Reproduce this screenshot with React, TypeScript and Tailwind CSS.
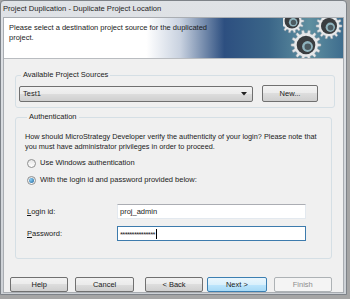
import React from "react";

const font = { fontFamily: '"Liberation Sans", Arial, sans-serif' };

function gearPath(cx: number, cy: number, ro: number, ri: number, teeth: number) {
  const pts: string[] = [];
  const step = (Math.PI * 2) / teeth;
  for (let i = 0; i < teeth; i++) {
    const a = i * step;
    const seq = [
      [a - step * 0.28, ri],
      [a - step * 0.16, ro],
      [a + step * 0.16, ro],
      [a + step * 0.28, ri],
    ];
    for (const [ang, r] of seq) {
      pts.push(`${(cx + Math.cos(ang) * r).toFixed(2)},${(cy + Math.sin(ang) * r).toFixed(2)}`);
    }
  }
  return "M" + pts.join("L") + "Z";
}

function Gear({ cx, cy, r }: { cx: number; cy: number; r: number }) {
  return (
    <g>
      <path d={gearPath(cx, cy, r, r * 0.8, 14)} fill="#e6e8ea" stroke="#9aa3aa" strokeWidth="0.5" />
      <circle cx={cx} cy={cy} r={r * 0.62} fill="#3a3d40" />
      <circle cx={cx + r * 0.1} cy={cy + r * 0.1} r={r * 0.36} fill="#8fb3bd" />
      <circle cx={cx + r * 0.12} cy={cy + r * 0.12} r={r * 0.22} fill="#4c5a60" />
    </g>
  );
}

function Gears() {
  return (
    <svg width="60" height="40" viewBox="0 0 60 40" className="shrink-0">
      <Gear cx={9} cy={3} r={12} />
      <Gear cx={46} cy={8} r={13} />
      <Gear cx={23} cy={27} r={15} />
    </svg>
  );
}

function WinButton({
  children,
  variant = "normal",
  className = "",
}: {
  children: React.ReactNode;
  variant?: "normal" | "default" | "disabled";
  className?: string;
}) {
  const styles =
    variant === "default"
      ? "border-[#3c7fb1] bg-[linear-gradient(#eaf6fd,#d9f0fc_50%,#bee6fd_50%,#a7d9f5)] text-[#1a1a1a]"
      : variant === "disabled"
      ? "border-[#adb2b5] bg-[#f4f4f4] text-[#8d8d8d]"
      : "border-[#707070] bg-[linear-gradient(#f2f2f2,#ebebeb_50%,#dddddd_50%,#cfcfcf)] text-[#1a1a1a]";
  return (
    <div
      className={`h-[15px] flex items-center justify-center rounded-[2px] border text-[7.5px] ${styles} ${className}`}
    >
      {children}
    </div>
  );
}

function Radio({ checked }: { checked?: boolean }) {
  return (
    <span className="w-[9px] h-[9px] rounded-full border border-[#8e8f8f] bg-[linear-gradient(#e6e6e6,#ffffff)] flex items-center justify-center shrink-0">
      {checked && <span className="w-[5px] h-[5px] rounded-full bg-[radial-gradient(circle_at_35%_35%,#8ad0f7,#1d5f96)]" />}
    </span>
  );
}

export default function App() {
  return (
    <div className="w-[350px] h-[299px] bg-[#a5a5a5] overflow-hidden" style={font}>
      <div className="w-[347px] h-[295px] bg-[linear-gradient(#dfe2e6,#cdd1d6)] border border-[#7d8288] rounded-t-[4px] flex flex-col">
        {/* Title bar */}
        <div className="h-[16px] flex items-center pl-[2px] text-[7.6px] text-[#1e1e1e]">
          Project Duplication - Duplicate Project Location
        </div>

        {/* Client area */}
        <div className="flex-1 mx-[2px] mb-[1px] bg-[#f0f0f0] border border-[#a9adb2] flex flex-col">
          {/* Header */}
          <div className="h-[41px] flex bg-[linear-gradient(to_right,#ffffff_0%,#ffffff_42%,#c9d2e0_52%,#2d4f80_65%,#3a6588_78%,#5f8fa0_90%,#3e6d8e_100%)] border-b border-[#b9bcc0]">
            <div className="flex-1 pl-[5px] pt-[5px] text-[7.5px] leading-[10px] text-[#1b1b1b]">
              Please select a destination project source for the duplicated
              <br />
              project.
            </div>
            <Gears />
          </div>

          {/* Body */}
          <div className="flex-1 flex flex-col px-[11px] pt-[11px]">
            <fieldset className="border border-[#d5dfe5] rounded-[3px] pl-[3px] pr-[16px] pb-[5px] pt-[5px]">
              <legend className="ml-[2px] px-[2px] text-[7.5px] leading-[10px] text-[#1b1b1b]">
                Available Project Sources
              </legend>
              <div className="flex items-center gap-[9px]">
                <div className="w-[234px] h-[16px] rounded-[2px] border border-[#707070] bg-[linear-gradient(#f2f2f2,#ebebeb_50%,#dddddd_50%,#cfcfcf)] flex items-center pl-[3px] pr-[5px] text-[7.5px] text-[#1b1b1b]">
                  <span className="flex-1">Test1</span>
                  <svg width="6" height="4" viewBox="0 0 6 4">
                    <path d="M0 0H6L3 3.5Z" fill="#222" />
                  </svg>
                </div>
                <WinButton className="w-[56px] h-[17px]">New...</WinButton>
              </div>
            </fieldset>

            <fieldset className="mt-[4px] border border-[#d5dfe5] rounded-[3px] pl-[9px] pr-[4px] pb-[17px] pt-[10px]">
              <legend className="ml-[2px] px-[2px] text-[7.5px] leading-[10px] text-[#1b1b1b]">
                Authentication
              </legend>
              <p className="text-[7.3px] leading-[9.5px] text-[#1b1b1b] whitespace-nowrap">
                How should MicroStrategy Developer verify the authenticity of your login? Please note that
                <br />
                you must have administrator privileges in order to proceed.
              </p>
              <div className="mt-[7px] pl-[2px] flex flex-col gap-[7px] text-[7.5px] leading-[10px] text-[#1b1b1b]">
                <label className="flex items-center gap-[4px]">
                  <Radio />
                  Use Windows authentication
                </label>
                <label className="flex items-center gap-[4px]">
                  <Radio checked />
                  With the login id and password provided below:
                </label>
              </div>
              <div className="mt-[19px] pl-[2px] flex flex-col gap-[7px] text-[7.5px] text-[#1b1b1b]">
                <div className="flex items-center">
                  <span className="w-[90px]">
                    <span className="underline">L</span>ogin id:
                  </span>
                  <div className="w-[189px] h-[15px] bg-white border border-[#e3e9ef] border-t-[#abadb3] flex items-center pl-[2px]">
                    proj_admin
                  </div>
                </div>
                <div className="flex items-center">
                  <span className="w-[90px]">
                    <span className="underline">P</span>assword:
                  </span>
                  <div className="w-[189px] h-[15px] bg-white border border-[#3d7bad] flex items-center pl-[2px]">
                    <span className="tracking-[-0.6px] leading-[6px] pt-[3px]">***************</span>
                    <span className="w-px h-[10px] bg-black ml-[1px]" />
                  </div>
                </div>
              </div>
            </fieldset>

            <div className="mt-auto flex items-center">
              <WinButton className="w-[61px] -ml-[5px]">Help</WinButton>
              <WinButton className="w-[61px] ml-[7px]">Cancel</WinButton>
              <WinButton className="w-[61px] ml-[11px]">&lt; Back</WinButton>
              <WinButton variant="default" className="w-[62px] ml-[4px]">
                Next &gt;
              </WinButton>
              <WinButton variant="disabled" className="w-[61px] ml-[7px]">
                Finish
              </WinButton>
            </div>
          </div>
        </div>
      </div>
    </div>
  );
}
